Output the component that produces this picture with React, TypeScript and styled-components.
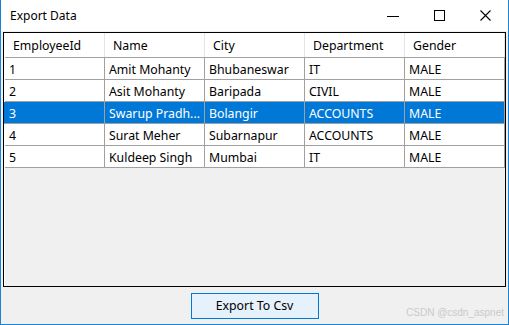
import React from "react"
import styled, { createGlobalStyle } from "styled-components"

const GlobalStyle = createGlobalStyle`
  html, body {
    margin: 0;
    padding: 0;
    background: #ffffff;
  }
  * {
    box-sizing: border-box;
  }
`

const Window = styled.div`
  position: relative;
  width: 509px;
  height: 325px;
  display: flex;
  flex-direction: column;
  background-color: #f0f0f0;
  border: 1px solid #1883d7;
  border-top: none;
  font-family: "Noto Sans", "Open Sans", sans-serif;
  font-size: 12px;
  color: #000000;
`

const TitleBar = styled.div`
  height: 31px;
  display: flex;
  align-items: center;
  background-color: #ffffff;
  padding-left: 9px;
`

const Title = styled.span`
  flex: 1;
  font-size: 12px;
  padding-bottom: 1px;
`

const CaptionButton = styled.div`
  width: 46px;
  height: 31px;
  display: flex;
  align-items: center;
  justify-content: center;
`

const Body = styled.div`
  flex: 1;
  display: flex;
  flex-direction: column;
  align-items: center;
  padding: 1px 2px 0 2px;
`

const Grid = styled.div`
  width: 503px;
  height: 255px;
  border: 1px solid #000000;
  background-color: #f0f0f0;
  padding-left: 1px;
  box-shadow: inset 1px 0 0 #ffffff;
`

const Row = styled.div<{ $header?: boolean; $selected?: boolean }>`
  display: grid;
  grid-template-columns: repeat(5, 100px);
  height: ${({ $header }) => ($header ? "25px" : "22px")};
  background-color: ${({ $selected }) => ($selected ? "#0078d7" : "#ffffff")};
  color: ${({ $selected }) => ($selected ? "#ffffff" : "#000000")};
  border-bottom: 1px solid #a0a0a0;
  margin-left: ${({ $selected }) => ($selected ? "-1px" : "0")};
  padding-left: ${({ $selected }) => ($selected ? "1px" : "0")};
`

const Cell = styled.div<{ $header?: boolean }>`
  display: flex;
  align-items: center;
  padding-left: ${({ $header }) => ($header ? "8px" : "4px")};
  padding-top: 1px;
  font-size: 12.3px;
  border-right: 1px solid ${({ $header }) => ($header ? "#e5e5e5" : "#a0a0a0")};
  white-space: nowrap;
  overflow: hidden;
`

const ExportButton = styled.button`
  margin-top: 6px;
  width: 128px;
  height: 26px;
  border: 1px solid #0078d7;
  background-color: #e5f1fb;
  font-family: "Noto Sans", "Open Sans", sans-serif;
  font-size: 12.3px;
  color: #000000;
  padding: 0 0 1px 0;
`

const Watermark = styled.span`
  position: absolute;
  right: 4px;
  bottom: 6px;
  font-family: "Liberation Sans", Arial, sans-serif;
  font-size: 10px;
  color: #cacaca;
`

const columns = ["EmployeeId", "Name", "City", "Department", "Gender"]

const employees = [
  ["1", "Amit Mohanty", "Bhubaneswar", "IT", "MALE"],
  ["2", "Asit Mohanty", "Baripada", "CIVIL", "MALE"],
  ["3", "Swarup Pradh...", "Bolangir", "ACCOUNTS", "MALE"],
  ["4", "Surat Meher", "Subarnapur", "ACCOUNTS", "MALE"],
  ["5", "Kuldeep Singh", "Mumbai", "IT", "MALE"],
]

const App = () => {
  return (
    <>
      <GlobalStyle />
      <Window>
        <TitleBar>
          <Title>Export Data</Title>
          <CaptionButton>
            <svg width="12" height="12" viewBox="0 0 12 12">
              <path d="M0 6.5h12" stroke="#000" strokeWidth="1" />
            </svg>
          </CaptionButton>
          <CaptionButton>
            <svg width="11" height="11" viewBox="0 0 11 11">
              <rect x="0.5" y="0.5" width="10" height="10" fill="none" stroke="#000" strokeWidth="1" />
            </svg>
          </CaptionButton>
          <CaptionButton>
            <svg width="11" height="11" viewBox="0 0 11 11">
              <path d="M0.5 0.5L10.5 10.5M10.5 0.5L0.5 10.5" stroke="#000" strokeWidth="1.1" />
            </svg>
          </CaptionButton>
        </TitleBar>
        <Body>
          <Grid>
            <Row $header>
              {columns.map((c) => (
                <Cell $header key={c}>{c}</Cell>
              ))}
            </Row>
            {employees.map((e, i) => (
              <Row key={e[0]} $selected={i === 2}>
                {e.map((v, j) => (
                  <Cell key={j}>{v}</Cell>
                ))}
              </Row>
            ))}
          </Grid>
          <ExportButton>Export To Csv</ExportButton>
        </Body>
        <Watermark>CSDN @csdn_aspnet</Watermark>
      </Window>
    </>
  )
}

export default App
